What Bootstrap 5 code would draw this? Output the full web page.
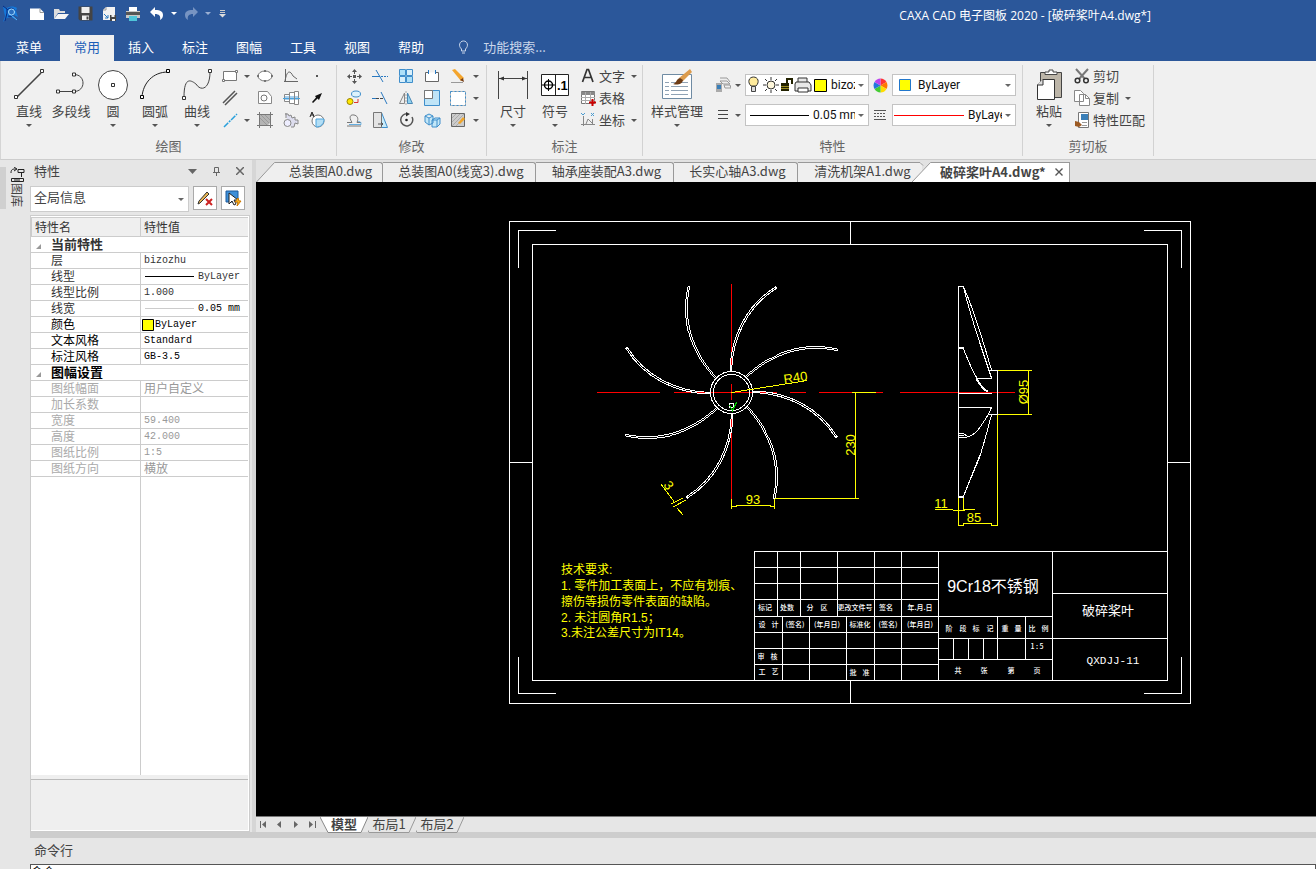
<!DOCTYPE html>
<html lang="zh-CN">
<head>
<meta charset="utf-8">
<meta name="viewport" content="width=device-width, initial-scale=1">
<title>CAXA CAD 电子图板 2020</title>
<link href="https://cdn.jsdelivr.net/npm/bootstrap@5.3.0/dist/css/bootstrap.min.css" rel="stylesheet">
<style>
:root{--ink:#444;--line:#ccc;--brand:#2b579a}
html,body{height:100%}
body{font-family:"Noto Sans CJK SC",sans-serif;font-size:13px;line-height:16px;color:var(--ink);background:#e6e6e6;overflow:hidden}
button{font:inherit;color:inherit;background:none;border:0;padding:0}
svg{display:block;flex:none}
.titlebar{background:var(--brand);color:#fff;height:61px}
.qat{height:27px}
.qat button{width:24px;height:24px;display:flex;align-items:center;justify-content:center}
.qat .logo-box{width:25px;justify-content:flex-start;padding-left:2px}
.qat .slim{width:10px}
.app-title{margin-right:165px;font-family:"Open Sans","Noto Sans CJK SC",sans-serif;font-size:12px;padding-top:4px}
.menu-tabs{height:26px;border:0;margin-top:8px;flex-wrap:nowrap}
.menu-tabs .nav-link{color:#fff;border:0;border-radius:0;padding:4px 14px 6px;line-height:16px}
.menu-tabs .first-tab{padding-left:16px;padding-right:18px}
.menu-tabs .nav-link.active{background:#f0f0f0;color:#1b5fb8}
.finder{color:#c9d6ea;margin-left:20px}
.finder input{background:none;border:0;color:#c9d6ea;width:90px;padding:0;font:inherit;outline:0}
.finder input::placeholder{color:#c9d6ea;opacity:1}
.finder svg{margin-right:14px}
.ribbon{height:99px;background:#f0f0f0;border-bottom:1px solid #cdcdcd;border-left:1px solid #d5d5d5}
.rgroup{border-right:1px solid #d2d2d2;margin:4px 0 3px;display:flex;flex-direction:column}
.grp-draw{width:336px}.grp-mod{width:150px}.grp-dim{width:156px}.grp-prop{width:380px}.grp-clip{width:131px}
.grp-draw .rbody,.grp-prop .rbody{padding-left:7px}
.grp-mod .rbody{padding-left:4px}
.grp-dim .rbody,.grp-clip .rbody{padding-left:5px}
.rbody{display:flex;height:70px}
.rlabel{text-align:center;color:#666;padding-top:3px}
.big{width:42px;display:flex;flex-direction:column;align-items:center;padding-top:4px!important;white-space:nowrap}
.big.wide{width:54px}
.big svg:first-child{width:32px;height:32px;margin-bottom:2px}
.big .caret{margin-top:5px}
.caret{width:0;height:0;border:3px solid transparent;border-top-color:#555;border-bottom:0;display:block}
.caret.on-dark{border-top-color:#fff}
.caret.dim{border-top-color:#9bb0d3}
.tiny{display:grid;grid-auto-rows:22px;align-items:center;justify-items:center;align-content:start}
.tiny button{display:flex;align-items:center;justify-content:center;min-height:20px}
.g-draw{grid-template-columns:24px 10px 26px 26px 26px}
.g-mod{grid-template-columns:repeat(5,26px) 10px}
.side{padding-left:4px}
.rowbtn{display:flex!important;align-items:center;height:22px;white-space:nowrap;gap:3px}
.rowbtn .caret{margin-left:3px}
.prop-rows{padding:9px 0 0 11px}
.combo{background:#fff;border:1px solid #c3c3c3;height:22px;width:124px;display:flex;align-items:center;padding-left:4px}
.combo.tight{padding-left:1px}
.combo select,.panel-combo select{appearance:none;border:0;background:transparent url("data:image/svg+xml,%3Csvg xmlns='http://www.w3.org/2000/svg' width='6' height='3'%3E%3Cpath d='M0 0h6L3 3z' fill='%23666'/%3E%3C/svg%3E") no-repeat right 4px center;color:#111;font-family:Roboto,"Noto Sans CJK SC",sans-serif;font-size:12px;line-height:16px;padding:0 13px 0 4px;min-width:0;flex:1;outline:0}
.rail{width:30px;padding-top:7px}
.rail-edge{width:6px;height:42px;background:#d0d0d0}
.rail-tab{width:16px;margin-left:3px;font-size:12px;line-height:16px;display:flex;flex-direction:column;align-items:center}
.rail-tab span{writing-mode:vertical-rl;text-orientation:sideways}
.props{width:220px}
.props-head{height:22px;padding:0 6px 0 4px}
.panel-combo{border:1px solid var(--line);background:#fff;width:159px;height:26px;display:flex}
.panel-combo select{font-size:13px;color:var(--ink);padding:0 13px 2px 3px}
.sq{width:24px;height:24px;border:1px solid #aaa!important;background:#fff!important;display:flex;align-items:center;justify-content:center}
.props-list{background:#fff;border:1px solid var(--line);margin-top:3px;padding:1px 1px 1px 0;min-height:0}
.ptable{width:100%;table-layout:fixed;border-collapse:separate;border-spacing:0;font-size:12px;line-height:14px;color:#333}
.ptable th,.ptable td{padding:0 0 1px 20px;height:16px;border-bottom:1px solid var(--line);font-weight:400;white-space:nowrap;text-align:left}
.ptable td{padding:0 0 0 3px;border-left:1px solid var(--line);font-family:"Liberation Mono","Noto Sans CJK SC",monospace;font-size:10px}
.ptable td.swatch{padding-left:1px}
.ptable thead th{height:20px;padding-left:3px;background:#efefef;border-left:1px solid var(--line);border-top:1px solid var(--line);line-height:16px}
.ptable .cat th{font-weight:700;font-size:13px;padding-left:5px}
.cat .tri{display:inline-block;width:0;height:0;border-left:5px solid transparent;border-bottom:5px solid #999;margin-right:10px}
.ptable .ink *{color:#000}
.ptable .off *{color:#aaa}
.ptable .off td{color:#999}
.ptable td.cjk{font-family:"Noto Sans CJK SC",sans-serif;font-size:12px;padding-bottom:1px}
.rest{background:linear-gradient(90deg,transparent 109px,var(--line) 109px,var(--line) 110px,transparent 110px)}
.hint{height:51px;background:#efefef;border-top:1px solid #bbb;box-shadow:0 -4px #efefef}
.gutter{width:6px;background:linear-gradient(90deg,#e6e6e6 2px,#d6d6d6 2px)}
.doc-tabs{height:22px;padding-top:2px;background:#e2e2e2}
.doc-tabs button{height:20px;background:#efefef;border-top:1px solid #999;border-right:1px solid #999;border-radius:0 3px 0 0;white-space:nowrap;text-align:center;line-height:14px;padding:0 0 4px 4px}
.doc-tabs .current{background:#fff;font-weight:700;display:flex;align-items:center;justify-content:space-between;padding:0 6px 2px 3px;border-radius:0}
.t-a{width:108px}.t-b{width:153px}.t-c{width:138px}.t-d{width:124px}.t-e{width:114px}.t-f{width:133px}
.doc-tabs .t-e{padding-left:15px;border-radius:0}
.canvas{background:#000;min-height:0}
.canvas svg{width:100%;height:100%}
.sheet-tabs{height:16px;border-top:1px solid #777}
.pager{width:64px;justify-content:space-between;padding:0 4px}
.sheet{position:relative;width:48px;height:16px;line-height:13px!important;padding-bottom:3px!important}
.sheet.plain{padding-right:6px}
.sheet svg{position:absolute;inset:0;width:100%;height:100%}
.sheet span{position:relative}
.cmd{border-top:6px solid #cdcdcd}
.cmd label{padding:4px 4px 6px;display:block}
.cmd input{display:block;width:100%;height:15px;margin-bottom:-10px;border:1px solid #555;border-radius:0;padding:0;font-size:12px;line-height:12px;background:#fff;color:#000}
.cad{font-family:"Liberation Sans","DejaVu Sans",sans-serif;font-size:13px;fill:#ff0;text-anchor:middle}
.note{font-family:"Liberation Sans","Noto Sans CJK SC",sans-serif;font-size:12px;fill:#ff0}
.cell{font-family:"Noto Sans CJK SC",sans-serif;font-size:7px;font-weight:500;fill:#fff;text-anchor:middle}
.white-text{font-family:"Liberation Sans","Noto Sans CJK SC",sans-serif;fill:#fff;text-anchor:middle}
.fs-lg{font-size:16px}
.fs-md{font-size:13px}
.mono{font-family:"Liberation Mono",monospace;font-size:11px}
</style>
</head>
<body class="d-flex flex-column">
<header class="titlebar flex-shrink-0">
  <div class="qat d-flex align-items-center">
    <button class="logo-box" aria-label="CAXA"><svg width="17" height="17" viewBox="0 0 17 17"><path d="M1 1l4 2c3-2 7-2 10 0l-1 3 2 6-4-2-1 1 4 4-6-3-4 1-4 4 2-6-1-4z" fill="#1577d8"/><path d="M1 1l4 3v4l-2 8M5 5c3-3 7-2 8 1M6 11c3 1 5 0 6-2" stroke="#0a2a80" fill="none"/><circle cx="9.500" cy="7" r="3" fill="#2b6fc0" stroke="#a4dcff"/><path d="M9 10l6 5" stroke="#5ab5f5"/></svg></button>
    <button aria-label="新建"><svg width="16" height="14" viewBox="0 0 16 14"><path d="M1 1.500h10l4 4V13H1z" fill="#fff"/><path d="M11 1.500v4h4" fill="none" stroke="#999"/></svg></button>
    <button aria-label="打开"><svg width="16" height="14" viewBox="0 0 16 14"><path d="M1 12V2h5l1 2h5v2H5z" fill="#ddd"/><path d="M1 12l4-5h11l-4 5z" fill="#f5f5f5"/></svg></button>
    <button aria-label="保存"><svg width="15" height="15" viewBox="0 0 15 15"><path d="M.5.500h14v14H2l-1.500-1.500z" fill="#444"/><path d="M3.500 1h8v6h-8zM4 9.500h7V14H4z" fill="#eee"/><path d="M8.500 10.500h2v3h-2z" fill="#444"/></svg></button>
    <button aria-label="另存为"><svg width="16" height="16" viewBox="0 0 16 16"><path d="M5 1h9v13H2V4z" fill="#f2f2f2"/><path d="M2 4h3V1" fill="none" stroke="#999"/><path d="M3 8l4 4M7 9v3H4" stroke="#2878c0" fill="none"/><path d="M9 9h6v6H9z" fill="#444"/><path d="M10.500 9h3v2h-3zM11 13h3v2h-3z" fill="#eee"/></svg></button>
    <button aria-label="打印"><svg width="16" height="16" viewBox="0 0 16 16"><path d="M4 1h8v5H4z" fill="#fff"/><path d="M1 5h14v7H1z" fill="#c8c8c8"/><path d="M1 6h14v3H1z" fill="#555"/><path d="M4 10h8v5H4z" fill="#4fc4d9"/></svg></button>
    <button aria-label="撤销"><svg width="16" height="14" viewBox="0 0 16 14"><path d="M6 0v3c6 0 8 2 8 5 0 2-1 4-3 5 1-4-1-6-5-6v3L1 5z" fill="#fff"/></svg></button>
    <button class="slim" aria-label="撤销列表"><span class="caret on-dark"></span></button>
    <button aria-label="重做"><svg width="16" height="14" viewBox="0 0 16 14"><path d="M10 0v3C4 3 2 5 2 8c0 2 1 4 3 5-1-4 1-6 5-6v3l5-5z" fill="#7794c2"/></svg></button>
    <button class="slim" aria-label="重做列表"><span class="caret dim"></span></button>
    <button class="slim ms-1" aria-label="自定义"><svg width="7" height="8" viewBox="0 0 7 8"><path d="M1 .500h5M1 2.500h5" stroke="#ccc"/><path d="M0 4h7L3.500 7.500z" fill="#ddd"/></svg></button>
    <div class="app-title ms-auto text-nowrap">CAXA CAD 电子图板 2020 - [破碎桨叶A4.dwg*]</div>
  </div>
  <nav class="nav nav-tabs menu-tabs align-items-start">
    <a class="nav-link first-tab" href="#">菜单</a><a class="nav-link active" href="#">常用</a><a class="nav-link" href="#">插入</a><a class="nav-link" href="#">标注</a><a class="nav-link" href="#">图幅</a><a class="nav-link" href="#">工具</a><a class="nav-link" href="#">视图</a><a class="nav-link" href="#">帮助</a>
    <label class="finder d-flex align-items-center pt-1"><svg width="11" height="14" viewBox="0 0 11 14"><path d="M3.500 9C0 6 1.500 1 5.500 1S11 6 7.500 9v2h-4zM4 13h3" fill="none" stroke="#c9d6ea"/></svg><input type="text" placeholder="功能搜索..." aria-label="功能搜索"></label>
  </nav>
</header>

<section class="ribbon d-flex flex-shrink-0">
  <div class="rgroup grp-draw">
    <div class="rbody">
      <button class="big"><svg viewBox="0 0 32 32"><path d="M4 28L28 4" stroke="#444" stroke-width="1.600"/><g fill="#fff" stroke="#333"><path d="M1.500 26.500h3v3h-3zM27.500.500h3v3h-3z"/></g></svg>直线<span class="caret"></span></button>
      <button class="big"><svg viewBox="0 0 32 32"><path d="M3 22.500h16c12 0 12-17 0-17" fill="none" stroke="#444"/><g fill="#fff" stroke="#333"><path d="M1.500 21h3v3h-3zM17.500 21h3v3h-3zM17.500 4h3v3h-3z"/></g></svg>多段线</button>
      <button class="big"><svg viewBox="0 0 32 32"><circle cx="16" cy="16" r="14.500" fill="#fff" stroke="#444"/><path d="M14.500 14.500h3v3h-3z" fill="#fff" stroke="#333"/></svg>圆<span class="caret"></span></button>
      <button class="big"><svg viewBox="0 0 32 32"><path d="M3 28C4 14 14 3 29 3" fill="none" stroke="#222"/><g fill="#fff" stroke="#000"><path d="M1.500 26.500h3v3h-3zM27.500.500h3v3h-3z"/></g></svg>圆弧<span class="caret"></span></button>
      <button class="big"><svg viewBox="0 0 32 32"><path d="M3 28C3 6 11 12 15 15c5 8 14 5 14-12" fill="none" stroke="#444"/><g fill="#fff" stroke="#333"><path d="M1.500 27.500h3v3h-3zM27.500.500h3v3h-3z"/></g></svg>曲线<span class="caret"></span></button>
      <div class="tiny g-draw">
        <button aria-label="矩形"><svg width="16" height="12"><path d="M1.500 1.500h13v9h-13z" fill="#fff" stroke="#777"/><path d="M.5 9.500h2v2h-2zM13.500.500h2v2h-2z" fill="#fff" stroke="#777"/></svg></button><span class="caret"></span>
        <button aria-label="椭圆"><svg width="16" height="12"><ellipse cx="8" cy="6" rx="7" ry="5" fill="#fff" stroke="#777"/><path d="M7 1h2M0 6h2M14 6h2M7 11h2" stroke="#333"/></svg></button>
        <button aria-label="公式曲线"><svg width="16" height="16"><path d="M2.500 1v13M1 13.500h14M2 13C4 2 7 2 10 8l4 3" fill="none" stroke="#666"/></svg></button>
        <button aria-label="点"><svg width="4" height="4"><path d="M1 1h2v2H1z" fill="#555"/></svg></button>
        <button aria-label="平行线"><svg width="16" height="16"><path d="M1 13L13 1M3 15L15 3" stroke="#555" stroke-width="1.500"/></svg></button><span></span>
        <button aria-label="填充"><svg width="16" height="16"><path d="M1.500 1.500h9l4 5v7h-13z" fill="#fff" stroke="#888"/><circle cx="7" cy="8" r="3" fill="none" stroke="#777"/></svg></button>
        <button aria-label="轴"><svg width="17" height="16"><path d="M1.500 4.500h5v-2h5v-1h4v13h-4v-1h-5v-2h-5z" fill="#fff" stroke="#888"/><path d="M2 6h13v4H2z" fill="#a9d0ee"/><path d="M0 8.500h17" stroke="#4aa3dd"/><path d="M6.500 3v10M11.500 2v12" stroke="#888"/></svg></button>
        <button aria-label="箭头"><svg width="12" height="12"><path d="M11 1L8 8 6.500 6.500 2 11l-1-1 4-4.500L4 4z" fill="#111"/></svg></button>
        <button aria-label="中心线"><svg width="15" height="15"><path d="M1 14L14 1" stroke="#29a0dc" stroke-width="1.500" stroke-dasharray="6 1 2 1"/></svg></button><span class="caret"></span>
        <button aria-label="剖面线"><svg width="16" height="16"><path d="M2 2h12v8l-4 4H2z" fill="#b4b4b4"/><path d="M0 2.500h16M0 13.500h16M2.500 0v16M13.500 0v16" stroke="#777"/><path d="M3 6l7 7M4 3l8 8M8 3l5 5" stroke="#999"/></svg></button>
        <button aria-label="齿轮"><svg width="16" height="16"><path d="M2 2h3l1 2 2-1 1 3 3-1v3h3v4l-3-1-1 4H8M3 1v5" fill="#dde" stroke="#888"/><circle cx="4.500" cy="11" r="3.500" fill="#eef" stroke="#888"/></svg></button>
        <button aria-label="文字圆"><svg width="17" height="16"><circle cx="9" cy="9" r="6" fill="#fff" stroke="#777"/><path d="M7 7h8c0 5-3 8-8 8z" fill="#b3def5" stroke="#4aa3dd"/><path d="M1 5l2-5 2 5M2 3h3" stroke="#222" fill="none"/></svg></button>
      </div>
    </div><div class="rlabel">绘图</div>
  </div>
  <div class="rgroup grp-mod">
    <div class="rbody"><div class="tiny g-mod">
      <button aria-label="平移"><svg width="15" height="15"><path d="M7.500 0l2.500 3H5zM7.500 15l2.500-3H5zM0 7.500L3 5v5zM15 7.500L12 5v5zM6 6h3v3H6zM7 3h1v2H7zM7 10h1v2H7zM3 7h2v1H3zM10 7h2v1h-2z" fill="#555"/></svg></button>
      <button aria-label="裁剪"><svg width="16" height="14"><path d="M0 7.500h8M4 1l7 12" stroke="#2878c0"/><path d="M9 7.500h7" stroke="#2878c0" stroke-dasharray="2 1"/></svg></button>
      <button aria-label="阵列"><svg width="14" height="14"><g stroke="#3f8ecb"><path d="M.5.500h6v6h-6zM7.500 7.500h6v6h-6z" fill="#aee0f8"/><path d="M7.500.500h6v6h-6zM.5 7.500h6v6h-6z" fill="#d9effa"/></g></svg></button>
      <button aria-label="打断"><svg width="16" height="13"><path d="M5 2.500H1.500v9h13v-9H11" fill="#fff" stroke="#666"/><path d="M4.500 0v4M11.500 0v4" stroke="#2878c0"/></svg></button>
      <button aria-label="删除"><svg width="16" height="16"><path d="M2 2l3-1 9 9-3 3z" fill="#f4a52d"/><path d="M10 12l3-2 1 4z" fill="#753d16"/><path d="M1 14.500h12" stroke="#999"/></svg></button><span class="caret"></span>
      <button aria-label="复制"><svg width="16" height="16"><ellipse cx="10" cy="4" rx="4.500" ry="3" fill="#ddf2fc" stroke="#3f8ecb"/><circle cx="4" cy="11.500" r="3" fill="#ffe600" stroke="#998400"/><path d="M8 12.500h4V9" stroke="#d33" fill="none"/></svg></button>
      <button aria-label="延伸"><svg width="16" height="14"><path d="M0 7.500h4M9 1l6 12" stroke="#2878c0"/><path d="M4 7.500h8" stroke="#444" stroke-dasharray="3 1"/></svg></button>
      <button aria-label="镜像"><svg width="14" height="14"><path d="M5.500 2v10.500h-5z" fill="#eee" stroke="#888"/><path d="M8.500 2v10.500h5z" fill="#8fd0ee" stroke="#4a88b5"/><path d="M7 0v14" stroke="#aaa" stroke-dasharray="2 1"/></svg></button>
      <button aria-label="缩放"><svg width="16" height="16"><path d="M.5.500h15v15H.5z" fill="#bfe4f7" stroke="#3f8ecb"/><path d="M.5.500h8v8h-8z" fill="#fff" stroke="#777"/></svg></button>
      <button aria-label="边界"><svg width="16" height="15"><path d="M.5.500h15v14H.5z" fill="#fff" stroke="#bbb"/><path d="M.5.500h15v14H.5z" fill="none" stroke="#3f8ecb" stroke-dasharray="2 2"/></svg></button><span class="caret"></span>
      <button aria-label="等距"><svg width="16" height="13"><path d="M1 8.500h5C2 2 5 .500 8 1s5 3 3 7.500h4M1 12h14" fill="none" stroke="#777"/><path d="M3 10.500h12c0-3-1-3-3-3" fill="none" stroke="#65aee0"/></svg></button>
      <button aria-label="过渡"><svg width="15" height="16"><path d="M8.500.500l6 15h-8z" fill="#c8ebfa" stroke="#3f8ecb"/><path d="M.5.500h8v15h-8z" fill="#e4e4e4" stroke="#777"/><path d="M5 12h5M8 10l2 2-2 2" fill="none" stroke="#555"/></svg></button>
      <button aria-label="旋转"><svg width="15" height="16"><path d="M9 2a6 6 0 1 0 4 3" fill="none" stroke="#555" stroke-width="1.500"/><path d="M7 0l4 2-4 2.500z" fill="#333"/><circle cx="7.500" cy="8" r="1.300" fill="#222"/></svg></button>
      <button aria-label="分解"><svg width="17" height="15"><path d="M1 3l4-2 4 2v7l-4 2-4-3zM1 3l4 2 4-2M5 5v7M8 7l3-2h5v6l-3 3H8zM8 7h5v7M13 7l3-2" fill="#c2e7f8" stroke="#3f8ecb"/></svg></button>
      <button aria-label="编辑"><svg width="16" height="16"><path d="M1.500 1.500h13v13h-13z" fill="#ccc" stroke="#666"/><path d="M2 6l4-4M2 10l8-8M2 14L14 2M6 14l8-8" stroke="#aaa"/><path d="M8 11l5-6 2 2-5 5z" fill="#f0a52a"/></svg></button><span class="caret"></span>
    </div></div><div class="rlabel">修改</div>
  </div>
  <div class="rgroup grp-dim">
    <div class="rbody">
      <button class="big"><svg viewBox="0 0 32 32"><path d="M1.500 2v28M30.500 2v28M2 9.500h28" stroke="#444"/><path d="M2 9.500l5-2v4zM30 9.500l-5-2v4z" fill="#333"/></svg>尺寸<span class="caret"></span></button>
      <button class="big"><svg viewBox="0 0 32 32"><path d="M2.500 5.500h27v21h-27zM16.500 5v21" fill="#fff" stroke="#222"/><circle cx="9.500" cy="16" r="4" fill="none" stroke="#000" stroke-width="1.500"/><path d="M3 16h13M9.500 10v12" stroke="#000"/><text x="18" y="21" font-size="13" font-weight="700" font-family="Liberation Sans,sans-serif">.1</text></svg>符号<span class="caret"></span></button>
      <div class="side">
        <button class="rowbtn"><svg width="16" height="16"><path d="M2.500 14L7 1.500h1.500L13 14M4 9.500h7.500" fill="none" stroke="#333" stroke-width="1.700"/></svg>文字<span class="caret"></span></button>
        <button class="rowbtn"><svg width="16" height="16"><path d="M1.500 1.500h13v12h-13z" fill="#fff" stroke="#777"/><path d="M1 2h14v3H1z" fill="#888"/><path d="M1 7.500h14M1 10.500h14M5.500 2v12M10.500 2v12" stroke="#aaa"/><path d="M12.500 9v7M9 12.500h7" stroke="#c00" stroke-width="2"/></svg>表格</button>
        <button class="rowbtn"><svg width="16" height="16"><path d="M3.500 4v10M1 12.500h14M6 12l2-5 5 5M12.500 7v5" fill="none" stroke="#888"/><path d="M1 1l2 2 2-2M11 1l3 3M14 1l-3 3" stroke="#4a9bd0" fill="none"/></svg>坐标<span class="caret"></span></button>
      </div>
    </div><div class="rlabel">标注</div>
  </div>
  <div class="rgroup grp-prop">
    <div class="rbody">
      <button class="big wide"><svg viewBox="0 0 32 32"><path d="M1.500 5.500h29v24h-29z" fill="#fff" stroke="#6f8ba3"/><path d="M4 13.500h4M4 17.500h4M4 21.500h4M4 25.500h4M10 13.500h17M10 17.500h17M10 21.500h17M10 25.500h17" stroke="#8fa2b4"/><path d="M29 0l2 3-9 9-4-3z" fill="#dc9b4d"/><path d="M22 11c-1 5-6 5-10 4 4-1 3-5 7-6z" fill="#6d3b15"/></svg>样式管理<span class="caret"></span></button>
      <div class="d-flex flex-column gap-2 prop-rows">
        <div class="d-flex align-items-center gap-1">
          <button aria-label="图层"><svg width="16" height="18"><path d="M5 5h7l3 3H8zM5 2h7l3 4M9 9h6l1 3h-6z" fill="#eee" stroke="#999"/><path d="M1 7h6v9H1z" fill="#aaa"/><path d="M2 9h4v4H2z" fill="#3a7fb8"/></svg></button><span class="caret"></span>
          <div class="combo tight">
            <svg width="80" height="20" viewBox="0 0 80 20"><path d="M4 11C0 7 2 2 6.500 2S13 7 9 11z" fill="#ffeb9c" stroke="#333"/><path d="M4.500 11.500h4v5h-4z" fill="#ddd" stroke="#444"/><circle cx="24" cy="10" r="4" fill="#fff8dc" stroke="#333"/><path d="M24 2v3M24 15v3M16 10h3M29 10h3M18 4l2 2M28 14l2 2M18 16l2-2M28 6l2-2" stroke="#333"/><path d="M34 8h8v8h-8z" fill="#220"/><path d="M40 9V4h5v5" fill="none" stroke="#220" stroke-width="2"/><path d="M34 11.500h8M34 13.500h8" stroke="#998c20"/><path d="M51 7V3h9v4M49 7h13l2 3v6H48V9z" fill="#e8e8e8" stroke="#333"/><path d="M51 13h10v4H51z" fill="#fff" stroke="#333"/><path d="M67.500 4.500h12v12h-12z" fill="#ff0" stroke="#000"/></svg>
            <select aria-label="图层"><option>bizozhu</option></select>
          </div>
          <button aria-label="颜色"><svg width="15" height="15" viewBox="-7 -7 14 14"><path d="M0 0V-6.500A6.500 6.500 0 0 1 5.600-3.200z" fill="#f33"/><path d="M0 0l5.600-3.200a6.500 6.500 0 0 1 0 6.400z" fill="#f70"/><path d="M0 0l5.600 3.200A6.500 6.500 0 0 1 0 6.500z" fill="#fd0"/><path d="M0 0v6.500a6.500 6.500 0 0 1-5.600-3.200z" fill="#4c3"/><path d="M0 0l-5.600 3.200a6.500 6.500 0 0 1 0-6.400z" fill="#27d"/><path d="M0 0l-5.600-3.200A6.500 6.500 0 0 1 0-6.500z" fill="#b4e"/></svg></button>
          <div class="combo tight"><svg width="20" height="14"><path d="M5.500 1.500h11v11h-11z" fill="#ff0" stroke="#27c"/></svg><select aria-label="颜色"><option>ByLayer</option></select></div>
        </div>
        <div class="d-flex align-items-center gap-1">
          <button aria-label="线宽"><svg width="16" height="12"><path d="M3 1.500h10M3 5.500h10M3 9.500h10" stroke="#444"/></svg></button><span class="caret"></span>
          <div class="combo"><svg width="59" height="1"><path d="M0 .500h59" stroke="#000"/></svg><select aria-label="线宽"><option>0.05 mm</option></select></div>
          <button aria-label="线型"><svg width="15" height="12"><path d="M1 1.500h12M1 10.500h12" stroke="#555"/><path d="M1 4.500h12M1 7.500h12" stroke="#555" stroke-dasharray="2 1"/></svg></button>
          <div class="combo tight"><svg width="70" height="1"><path d="M0 0h70v1H0z" fill="#f00"/></svg><select aria-label="线型"><option>ByLayer</option></select></div>
        </div>
      </div>
    </div><div class="rlabel">特性</div>
  </div>
  <div class="rgroup grp-clip">
    <div class="rbody">
      <button class="big"><svg viewBox="0 0 32 32"><path d="M7.500 3.500h21v25h-21z" fill="#bcb5a8" stroke="#444"/><path d="M12 5.500V3h4V1h4v2h4v2.500z" fill="#fff" stroke="#444"/><path d="M10 10.500h11.500v20h-17V16z" fill="#fff" stroke="#333"/><path d="M10 10v6H4" fill="#ddd" stroke="#333"/></svg>粘贴<span class="caret"></span></button>
      <div class="side">
        <button class="rowbtn"><svg width="16" height="16"><path d="M2 1l9 10M14 1L5 11" stroke="#777" stroke-width="2"/><circle cx="3.500" cy="12.500" r="2.300" fill="none" stroke="#333" stroke-width="1.500"/><circle cx="12" cy="12.500" r="2.300" fill="none" stroke="#333" stroke-width="1.500"/></svg>剪切</button>
        <button class="rowbtn"><svg width="16" height="16"><path d="M.5.500h6l3 3v8h-9zM5.500 4.500h6l4 4v7h-10z" fill="#fff" stroke="#888"/><path d="M11.500 4.500v4h4" fill="none" stroke="#888"/></svg>复制<span class="caret"></span></button>
        <button class="rowbtn"><svg width="16" height="16"><path d="M4.500.500h10v15h-10z" fill="#fff" stroke="#777"/><path d="M7 2h7v6H7z" fill="#3a7fb8"/><path d="M8 10.500h5M8 13.500h5" stroke="#999"/><path d="M1 9l4 1 3 3-3 2-4-1z" fill="#9c5a22"/></svg>特性匹配</button>
      </div>
    </div><div class="rlabel">剪切板</div>
  </div>
</section>

<div class="d-flex flex-fill" style="min-height:0">
  <aside class="rail d-flex flex-shrink-0">
    <div class="rail-edge"></div>
    <button class="rail-tab align-self-start"><svg width="15" height="16"><path d="M1 6c0-4 2-4 5-4M4 0l3 2-3 2M8 2.500h6v3H8zM11.500 5v5M1.500 11.500h12v3h-12zM4 13h6" fill="none" stroke="#222"/></svg><span>图库</span></button>
  </aside>
  <div class="d-flex flex-column flex-fill" style="min-width:0">
    <div class="d-flex flex-fill" style="min-height:0">
      <section class="props d-flex flex-column flex-shrink-0">
        <div class="props-head d-flex align-items-center">特性<span class="ms-auto d-flex align-items-center gap-3"><button aria-label="菜单"><svg width="9" height="5"><path d="M0 0h9L4.500 5z" fill="#666"/></svg></button><button aria-label="固定"><svg width="7" height="9"><path d="M1.500 5V.500h4V5M0 5.500h7M3.500 5v4" fill="none" stroke="#666"/></svg></button><button aria-label="关闭"><svg width="8" height="8"><path d="M0 0l8 8M8 0L0 8" stroke="#666" stroke-width="1.500"/></svg></button></span></div>
        <div class="d-flex gap-1 pt-1">
          <div class="panel-combo"><select aria-label="对象"><option>全局信息</option></select></div>
          <button class="sq" aria-label="清除"><svg width="17" height="17"><path d="M2 11L10 2l2 2-9 9-2 1z" fill="#e8b552" stroke="#333"/><path d="M9 9l6 6M15 9l-6 6" stroke="#c22" stroke-width="2"/></svg></button>
          <button class="sq" aria-label="快速选择"><svg width="17" height="17"><path d="M1 1h12v11H1z" fill="#3d8fd8" stroke="#1c5a9c"/><path d="M4 3v11l3-3 2 4 2-1-2-4h4z" fill="#fff" stroke="#222"/><path d="M13 8l-3 4h3l-1 4 4-5h-2z" fill="#fb2" stroke="#c70"/></svg></button>
        </div>
        <div class="props-list flex-fill d-flex flex-column">
          <table class="ptable">
            <colgroup><col style="width:109px"><col></colgroup>
            <thead><tr><th>特性名</th><th>特性值</th></tr></thead>
            <tbody>
              <tr class="cat"><th colspan="2"><span class="tri"></span>当前特性</th></tr>
              <tr><th>层</th><td>bizozhu</td></tr>
              <tr><th>线型</th><td><div class="d-flex align-items-center"><svg width="54" height="1"><path d="M1 .500h49" stroke="#000"/></svg>ByLayer</div></td></tr>
              <tr><th>线型比例</th><td>1.000</td></tr>
              <tr><th>线宽</th><td class="text-black"><div class="d-flex align-items-center"><svg width="54" height="1"><path d="M1 .500h49" stroke="#ccc"/></svg>0.05 mm</div></td></tr>
              <tr class="ink"><th>颜色</th><td class="swatch"><div class="d-flex align-items-center"><svg width="13" height="12"><path d="M.5.500h11v11H.5z" fill="#ff0" stroke="#000"/></svg>ByLayer</div></td></tr>
              <tr class="ink"><th>文本风格</th><td>Standard</td></tr>
              <tr class="ink"><th>标注风格</th><td>GB-3.5</td></tr>
              <tr class="cat ink"><th colspan="2"><span class="tri"></span>图幅设置</th></tr>
              <tr class="off"><th>图纸幅面</th><td class="cjk">用户自定义</td></tr>
              <tr class="off"><th>加长系数</th><td></td></tr>
              <tr class="off"><th>宽度</th><td>59.400</td></tr>
              <tr class="off"><th>高度</th><td>42.000</td></tr>
              <tr class="off"><th>图纸比例</th><td>1:5</td></tr>
              <tr class="off"><th>图纸方向</th><td class="cjk">横放</td></tr>
            </tbody>
          </table>
          <div class="rest flex-fill"></div>
          <div class="hint"></div>
        </div>
      </section>
      <div class="gutter flex-shrink-0"></div>
      <main class="d-flex flex-column flex-fill" style="min-width:0">
        <div class="doc-tabs d-flex flex-shrink-0">
          <svg width="19" height="20"><path d="M.5 20L18.500.500H20V20" fill="#efefef" stroke="#999"/></svg>
          <button class="t-a">总装图A0.dwg</button><button class="t-b">总装图A0(线宽3).dwg</button><button class="t-c">轴承座装配A3.dwg</button><button class="t-d">长实心轴A3.dwg</button><button class="t-e border-end-0">清洗机架A1.dwg</button>
          <svg width="25" height="20"><path d="M0 .500h10v19H0" fill="#efefef"/><path d="M0 .500h8l3 3" fill="none" stroke="#999"/><path d="M0 20L18.500.500H26V20z" fill="#fff"/><path d="M0 20L18.500.500H26" stroke="#999" fill="none"/></svg>
          <button class="current t-f">破碎桨叶A4.dwg*<svg width="8" height="8" aria-label="关闭"><path d="M.5.500l7 7M7.500.500l-7 7" stroke="#555" stroke-width="1.400"/></svg></button>
        </div>
        <div class="canvas flex-fill">
<svg viewBox="256 182 1060 634" role="img" aria-label="破碎桨叶图纸">
  <g fill="none" stroke="#fff" shape-rendering="crispEdges">
    <path d="M509.500 221.500h681v482h-681zM532.500 244.500h635v436h-635z"/>
    <path d="M518.500 268v-37.500H556M1144 230.500h37.500V268M518.500 657v36.500H556M1144 693.500h37.500V657M850.500 222v22M850.500 681v22M510 462.500h22M1168 462.500h22"/>
    <path d="M754.500 680V551.500H1167M754 567.500h184M754 583.500h184M754 599.500h184M754 616.500h298M754 632.500h184M754 648.500h184M754 664.500h184M777.500 551v65M800.500 551v65M837.500 551v65M782.500 616v64M809.500 616v64M846.500 616v64M874.500 551v129M901.500 551v129M938.500 551v129M1052.500 551v129M938 638.500h229M938 659.500h114M1052 593.500h115M997.500 616v43M1025.500 616v43M953.500 638v21M968.500 638v21M983.500 638v21"/>
  </g>
  <path d="M597 392.500h63M674 392.500h103M790 392.500h16M819 392.500h64M900 392.500h115M731.500 284v87M731.500 384v16M731.500 413v86" stroke="#f00" shape-rendering="crispEdges"/>
  <g transform="translate(731.500 392.500)" fill="none" stroke="#fff" shape-rendering="crispEdges">
    <circle r="21"/><circle r="18"/>
    <g id="quad">
      <path id="blade" d="M21-1.500C55-1 87 14 105.500 44L104.300 45.200C86 16 55 1 21 0"/>
      <use href="#blade" transform="rotate(45)"/><use href="#blade" transform="rotate(90)"/><use href="#blade" transform="rotate(135)"/>
    </g>
    <use href="#quad" transform="rotate(180)"/>
    <path d="M-2 10.500h4v4h-4z"/><path d="M-2 13l3 5 4-8" stroke="#0c0"/>
  </g>
  <g fill="none" stroke="#fff" shape-rendering="crispEdges">
    <path d="M958.500 498V286.500h5M963.500 287C974 309 982 338 991.500 370M963.500 287C971 319 981 346 991.500 378M988 370.500h9.500v44H988M977 378.500h15M958 347.500h5c4 10 6 17 14 31s8 10 11 13M958 348.500h5M976 379c4 7 7 10 11 13M958 393.500h34M958 407.500h33.500L988 415c-6 9-13 24-25 22M958 433.500h5l5 3M958 435.500h6M958 437.500h9M991.500 415c-4 14-8 32-13 45l-15 36M980 455l-16 40M958 496.500h6M958 497.500h6"/>
  </g>
  <g fill="none" stroke="#ff0" shape-rendering="crispEdges">
    <path d="M731.500 392.500l76-12M852 392.500h24M855.500 393v105M775 498.500h84M731.500 499v10M774.500 499v10M732 506.500h4v-1h34v1h4M661 484l14 19M677 508l6 7M671 504l12-6M673 507l13-7"/>
    <path d="M998 370.500h34M998 414.500h34M1028.500 371v43M997.500 415v111M958.500 498v28M963.500 498v13M935 509.500h17l2 1h9l3-1h9M959 525.500h4v-2h28v2h6"/>
  </g>
  <g class="cad">
    <text transform="translate(796 382) rotate(-8)">R40</text>
    <text transform="translate(855 445) rotate(-90)">230</text>
    <text x="753" y="504">93</text>
    <text transform="translate(665 488) rotate(54)">3</text>
    <text transform="translate(1028 392) rotate(-90)">Ø95</text>
    <text x="941" y="508">11</text><text x="974" y="522">85</text>
  </g>
  <g class="note">
    <text x="561" y="574">技术要求:</text><text x="561" y="590">1. 零件加工表面上，不应有划痕、</text><text x="561" y="606">擦伤等损伤零件表面的缺陷。</text><text x="561" y="622">2. 未注圆角R1.5；</text><text x="561" y="637">3.未注公差尺寸为IT14。</text>
  </g>
  <g class="cell">
    <text x="765" y="610">标记</text><text x="787" y="610">处数</text><text x="810" y="610">分</text><text x="824" y="610">区</text><text x="855" y="610">更改文件号</text><text x="886" y="610">签名</text><text x="920" y="610">年.月.日</text>
    <text x="762" y="627">设</text><text x="775" y="627">计</text><text x="795" y="627">(签名)</text><text x="827" y="627">(年月日)</text><text x="860" y="627">标准化</text><text x="888" y="627">(签名)</text><text x="920" y="627">(年月日)</text>
    <text x="761" y="659">审</text><text x="774" y="659">核</text><text x="762" y="674">工</text><text x="775" y="674">艺</text><text x="853" y="675">批</text><text x="866" y="675">准</text>
    <text x="949" y="631">阶</text><text x="963" y="631">段</text><text x="976" y="631">标</text><text x="990" y="631">记</text><text x="1005" y="631">重</text><text x="1018" y="631">量</text><text x="1032" y="631">比</text><text x="1045" y="631">例</text>
    <text x="1037" y="649">1 : 5</text><text x="958" y="673">共</text><text x="984" y="673">张</text><text x="1011" y="673">第</text><text x="1037" y="673">页</text>
  </g>
  <g class="white-text">
    <text x="993" y="592" class="fs-lg">9Cr18不锈钢</text><text x="1108" y="615" class="fs-md">破碎桨叶</text><text x="1113" y="664" class="mono">QXDJJ-11</text>
  </g>
</svg>
        </div>
        <div class="sheet-tabs d-flex flex-shrink-0">
          <div class="pager d-flex align-items-center">
            <button aria-label="首页"><svg width="7" height="7"><path d="M.5 0v7" stroke="#666"/><path d="M6 0v7L2 3.500z" fill="#666"/></svg></button><button aria-label="上一页"><svg width="5" height="7"><path d="M4 0v7L0 3.500z" fill="#666"/></svg></button><button aria-label="下一页"><svg width="5" height="7"><path d="M1 0v7l4-3.500z" fill="#666"/></svg></button><button aria-label="末页"><svg width="8" height="7"><path d="M7.500 0v7" stroke="#666"/><path d="M1 0v7l4-3.500z" fill="#666"/></svg></button>
          </div>
          <button class="sheet fw-bold"><svg viewBox="0 0 48 16" preserveAspectRatio="none"><path d="M0 0l8 15.500h33L48 0" fill="#fff" stroke="#888"/></svg><span>模型</span></button>
          <button class="sheet plain"><svg viewBox="0 0 48 16" preserveAspectRatio="none"><path d="M-3 8l4 7.500h40L48 0" fill="none" stroke="#999"/></svg><span>布局1</span></button>
          <button class="sheet plain"><svg viewBox="0 0 48 16" preserveAspectRatio="none"><path d="M-3 8l4 7.500h40L48 0" fill="none" stroke="#999"/></svg><span>布局2</span></button>
        </div>
      </main>
    </div>
    <section class="cmd flex-shrink-0"><label for="cmdline">命令行</label><input id="cmdline" type="text" value="命令:"></section>
  </div>
</div>
<script src="https://cdn.jsdelivr.net/npm/bootstrap@5.3.0/dist/js/bootstrap.bundle.min.js"></script>
</body>
</html>
